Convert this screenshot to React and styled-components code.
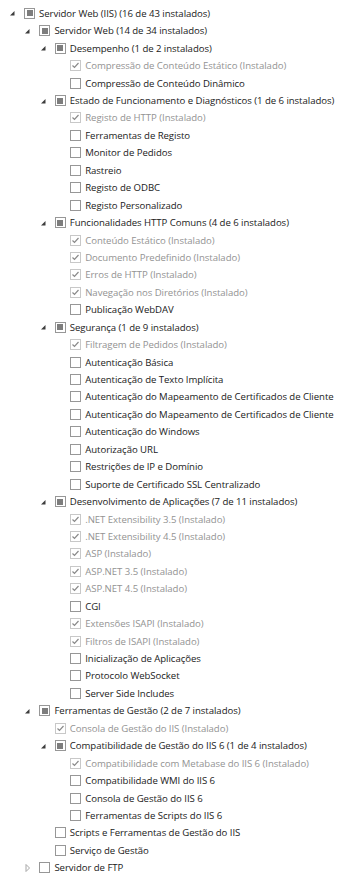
import styled, { createGlobalStyle } from "styled-components"

const Global = createGlobalStyle`
    html, body {
        margin: 0;
        padding: 0;
        background: #ffffff;
    }
    body {
        font-family: "Open Sans", "Noto Sans", sans-serif;
    }
`

const ROW = 17.45
const INDENT = 15.4

const Tree = styled.ul`
    list-style: none;
    margin: 0;
    padding: 4.6px 0 0 0;
    width: 350px;
`

const Row = styled.li`
    display: flex;
    align-items: center;
    height: ${ROW}px;
    padding-left: ${p => 8 + p.$level * INDENT}px;
    white-space: nowrap;
`

const Expander = styled.span`
    display: flex;
    align-items: center;
    width: 16px;
    height: 100%;
    flex: none;
`

const Box = styled.span`
    flex: none;
    box-sizing: border-box;
    width: 11px;
    height: 11px;
    border: 1px solid ${p => (p.$disabled ? "#c8c8c8" : "#979797")};
    background: #fff;
    display: flex;
    align-items: center;
    justify-content: center;
`

const Partial = styled.span`
    width: 6px;
    height: 6px;
    background: #7d7d7d;
`

const Label = styled.span`
    margin-left: 4px;
    font-size: 9.6px;
    letter-spacing: -0.05px;
    color: ${p => (p.$disabled ? "#939393" : "#1a1a1a")};
`

const tree = [
    { t: "Servidor Web (IIS) (16 de 43 instalados)", s: "partial", open: true, c: [
        { t: "Servidor Web (14 de 34 instalados)", s: "partial", open: true, c: [
            { t: "Desempenho (1 de 2 instalados)", s: "partial", open: true, c: [
                { t: "Compressão de Conteúdo Estático (Instalado)", s: "done" },
                { t: "Compressão de Conteúdo Dinâmico" },
            ]},
            { t: "Estado de Funcionamento e Diagnósticos (1 de 6 instalados)", s: "partial", open: true, c: [
                { t: "Registo de HTTP (Instalado)", s: "done" },
                { t: "Ferramentas de Registo" },
                { t: "Monitor de Pedidos" },
                { t: "Rastreio" },
                { t: "Registo de ODBC" },
                { t: "Registo Personalizado" },
            ]},
            { t: "Funcionalidades HTTP Comuns (4 de 6 instalados)", s: "partial", open: true, c: [
                { t: "Conteúdo Estático (Instalado)", s: "done" },
                { t: "Documento Predefinido (Instalado)", s: "done" },
                { t: "Erros de HTTP (Instalado)", s: "done" },
                { t: "Navegação nos Diretórios (Instalado)", s: "done" },
                { t: "Publicação WebDAV" },
            ]},
            { t: "Segurança (1 de 9 instalados)", s: "partial", open: true, c: [
                { t: "Filtragem de Pedidos (Instalado)", s: "done" },
                { t: "Autenticação Básica" },
                { t: "Autenticação de Texto Implícita" },
                { t: "Autenticação do Mapeamento de Certificados de Cliente" },
                { t: "Autenticação do Mapeamento de Certificados de Cliente" },
                { t: "Autenticação do Windows" },
                { t: "Autorização URL" },
                { t: "Restrições de IP e Domínio" },
                { t: "Suporte de Certificado SSL Centralizado" },
            ]},
            { t: "Desenvolvimento de Aplicações (7 de 11 instalados)", s: "partial", open: true, c: [
                { t: ".NET Extensibility 3.5 (Instalado)", s: "done" },
                { t: ".NET Extensibility 4.5 (Instalado)", s: "done" },
                { t: "ASP (Instalado)", s: "done" },
                { t: "ASP.NET 3.5 (Instalado)", s: "done" },
                { t: "ASP.NET 4.5 (Instalado)", s: "done" },
                { t: "CGI" },
                { t: "Extensões ISAPI (Instalado)", s: "done" },
                { t: "Filtros de ISAPI (Instalado)", s: "done" },
                { t: "Inicialização de Aplicações" },
                { t: "Protocolo WebSocket" },
                { t: "Server Side Includes" },
            ]},
        ]},
        { t: "Ferramentas de Gestão (2 de 7 instalados)", s: "partial", open: true, c: [
            { t: "Consola de Gestão do IIS (Instalado)", s: "done" },
            { t: "Compatibilidade de Gestão do IIS 6 (1 de 4 instalados)", s: "partial", open: true, c: [
                { t: "Compatibilidade com Metabase do IIS 6 (Instalado)", s: "done" },
                { t: "Compatibilidade WMI do IIS 6" },
                { t: "Consola de Gestão do IIS 6" },
                { t: "Ferramentas de Scripts do IIS 6" },
            ]},
            { t: "Scripts e Ferramentas de Gestão do IIS" },
            { t: "Serviço de Gestão" },
        ]},
        { t: "Servidor de FTP", open: false, c: [] },
    ]},
]

function Arrow({ open }) {
    if (open) {
        return (
            <svg width="8" height="8" viewBox="0 0 8 8" style={{ marginLeft: 1 }}>
                <path d="M1 6.5 L5.5 2 L5.5 6.5 Z" fill="#3c3c3c" />
            </svg>
        )
    }
    return (
        <svg width="8" height="8" viewBox="0 0 8 8" style={{ marginLeft: 1 }}>
            <path d="M2 0.5 L5.5 4 L2 7.5 Z" fill="none" stroke="#a6a6a6" strokeWidth="1" />
        </svg>
    )
}

function Check({ state }) {
    const done = state === "done"
    return (
        <Box $disabled={done}>
            {state === "partial" && <Partial />}
            {done && (
                <svg width="9" height="9" viewBox="0 0 9 9">
                    <path d="M1.5 4.5 L3.5 6.5 L7.5 2" fill="none" stroke="#8a8a8a" strokeWidth="1.2" />
                </svg>
            )}
        </Box>
    )
}

function Node({ node, level }) {
    const hasKids = Array.isArray(node.c)
    return (
        <>
            <Row $level={level}>
                <Expander>{hasKids && <Arrow open={node.open} />}</Expander>
                <Check state={node.s} />
                <Label $disabled={node.s === "done"}>{node.t}</Label>
            </Row>
            {hasKids && node.open && node.c.map((k, i) => <Node key={i} node={k} level={level + 1} />)}
        </>
    )
}

export default function App() {
    return (
        <>
            <Global />
            <Tree>
                {tree.map((n, i) => <Node key={i} node={n} level={0} />)}
            </Tree>
        </>
    )
}
